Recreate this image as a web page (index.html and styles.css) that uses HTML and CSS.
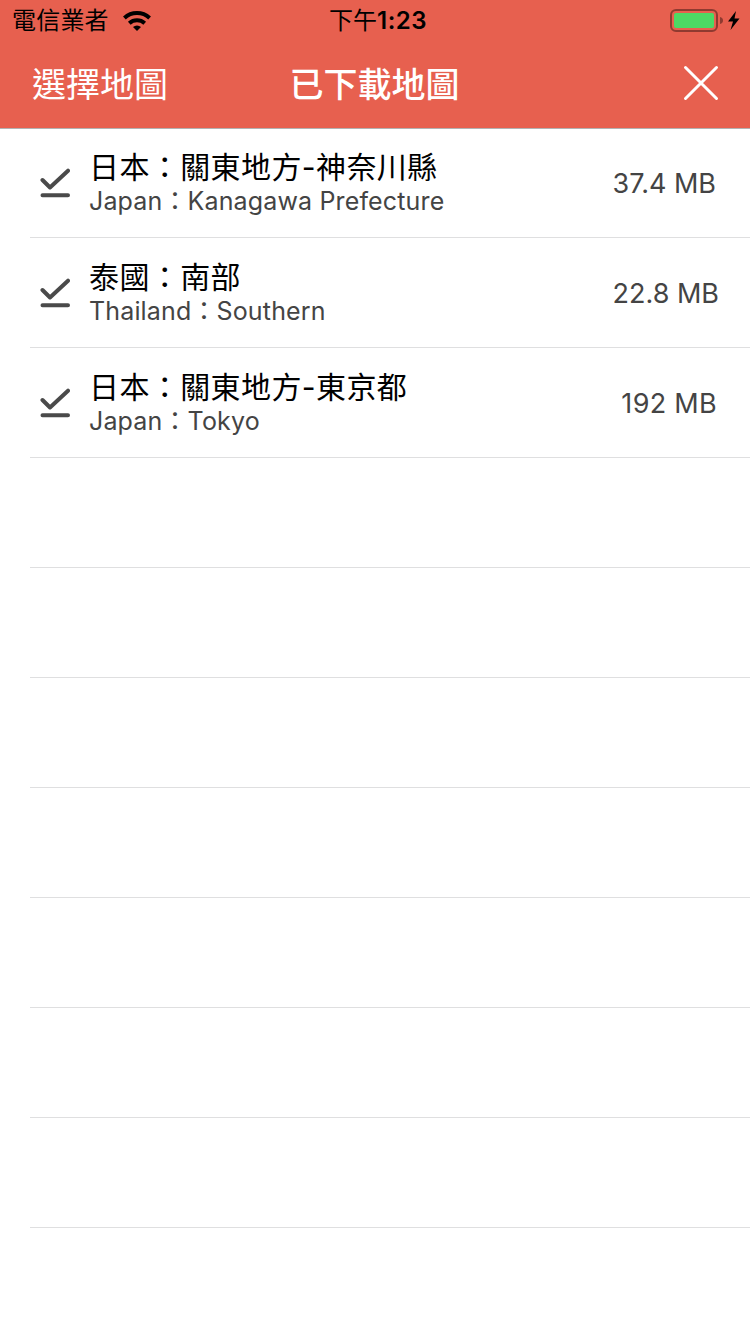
FILE: index.html
```html
<!DOCTYPE html>
<html lang="zh-Hant">
<head>
<meta charset="utf-8">
<title>已下載地圖</title>
<link rel="stylesheet" href="styles.css">
</head>
<body>
<header class="header">
  <div class="status">
    <div class="carrier"><span>電信業者</span>
      <svg class="wifi" width="28" height="20" viewBox="0 0 28 20"><path d="M14 20l4-3.900a6 6 0 0 0-8 0z"/><path class="arc" d="M6.300 12.200a11.500 11.500 0 0 1 15.400 0M1.400 7a18.500 18.500 0 0 1 25.200 0"/></svg>
    </div>
    <span class="clock">下午<span class="digits">1:23</span></span>
    <svg class="battery" width="72" height="24" viewBox="0 0 72 24"><rect class="case" x="1" y="1" width="46" height="21" rx="5"/><rect class="charge" x="4" y="4" width="40" height="15" rx="2"/><path class="cap" d="M50 8q3 .8 3 3.500t-3 3.500z"/><path d="M66 2l-8 10.500h5L60.500 21 69.500 9.500h-5z"/></svg>
  </div>
  <nav class="nav">
    <span class="select">選擇地圖</span>
    <h1 class="title">已下載地圖</h1>
    <svg class="close" width="36" height="36" viewBox="0 0 36 36"><path d="M2.500 2.500l31 31M33.500 2.500l-31 31"/></svg>
  </nav>
</header>
<main class="list">
  <div class="row"><svg class="check" width="30" height="30" viewBox="0 0 30 30"><path d="M2.500 12l7.500 7.500L28 2.700M2.500 27.300h25.500"/></svg><div class="names"><span class="name">日本：關東地方-神奈川縣</span><span class="sub">Japan：Kanagawa Prefecture</span></div><span class="size">37.4 MB</span></div>
  <div class="row"><svg class="check" width="30" height="30" viewBox="0 0 30 30"><path d="M2.500 12l7.500 7.500L28 2.700M2.500 27.300h25.500"/></svg><div class="names"><span class="name">泰國：南部</span><span class="sub">Thailand：Southern</span></div><span class="size size-wide">22.8 MB</span></div>
  <div class="row"><svg class="check" width="30" height="30" viewBox="0 0 30 30"><path d="M2.500 12l7.500 7.500L28 2.700M2.500 27.300h25.500"/></svg><div class="names"><span class="name">日本：關東地方-東京都</span><span class="sub">Japan：Tokyo</span></div><span class="size size-whole">192 MB</span></div>
  <div class="row"></div><div class="row"></div><div class="row"></div><div class="row"></div><div class="row"></div><div class="row"></div><div class="row"></div>
</main>
</body>
</html>
```
FILE: styles.css
```css
* { box-sizing: border-box; }
body { margin: 0; height: 1334px; overflow: hidden; background: #fff; color: #000; font-family: Inter, "Noto Sans CJK TC", sans-serif; }
.header { height: 128px; background: #e7604f; box-shadow: 0 1px #b2b2b2; }
.status { display: grid; grid-template-columns: 1fr auto 1fr; height: 40px; align-items: center; padding: 1px 8px 0 12px; font-size: 24px; line-height: 40px; }
.carrier { display: flex; align-items: center; gap: 15px; letter-spacing: .2px; }
.wifi { margin-left: -1px; }
.arc { fill: none; stroke: #000; stroke-width: 4; }
.clock { padding-left: 2px; font-weight: 400; }
.digits { font-weight: 600; letter-spacing: .5px; }
.battery { justify-self: end; }
.case { fill: none; stroke: #8f3a30; stroke-width: 2; }
.cap { fill: #8f3a30; }
.charge { fill: #4cd964; }
.nav { display: grid; grid-template-columns: 1fr auto 1fr; align-items: center; height: 86px; padding: 0 31px 0 32px; color: #fff; }
.select { padding-bottom: 2px; font-size: 34px; }
.title { margin: 0; padding: 0 2px 2px 0; font-size: 34px; font-weight: 500; }
.close { justify-self: end; fill: none; stroke: #fff; stroke-width: 3; stroke-linecap: round; }
.list { padding-left: 30px; }
.row { display: flex; height: 110px; align-items: center; padding: 0 34px 0 10px; border-bottom: 1px solid #dfdfe0; }
.check { fill: none; stroke: #4a4a4a; stroke-width: 4; stroke-linecap: round; stroke-linejoin: round; }
.names { display: flex; flex-direction: column; flex: 1; margin-left: 19px; }
.name { font-size: 30px; line-height: 36px; letter-spacing: .4px; white-space: nowrap; }
.sub { font-size: 25px; line-height: 32px; letter-spacing: .15px; color: #444; white-space: nowrap; }
.size { padding-top: 2px; font-size: 27px; color: #444; }
.size-wide { margin-right: -3px; }
.size-whole { margin-right: -1px; letter-spacing: .3px; }
```
